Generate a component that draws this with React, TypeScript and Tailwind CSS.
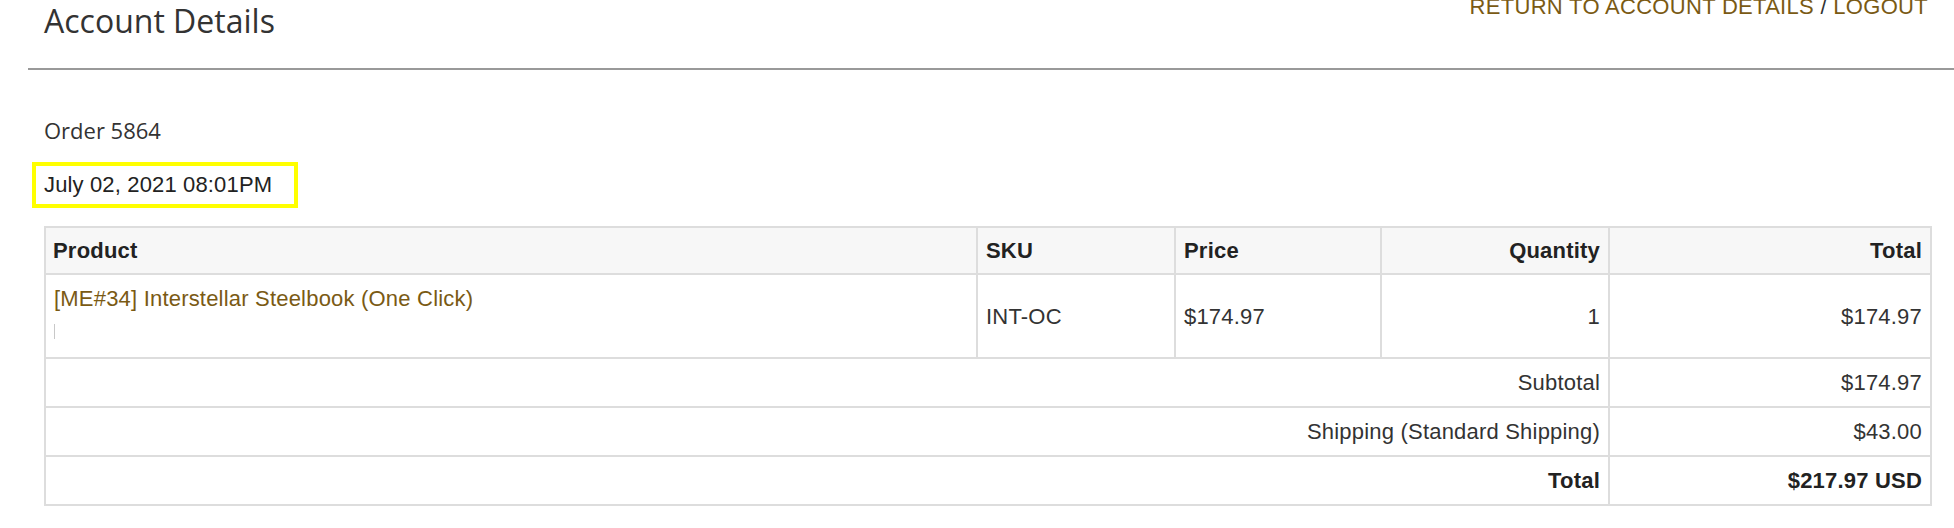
import React from 'react';

const cell = "border-2 border-[#dddddd] px-[8px] py-[8px] leading-[31px]";

export default function App() {
  return (
    <div className="w-[1954px] h-[528px] overflow-hidden bg-white pl-[28px] text-[#333333] font-['Liberation_Sans',Arial,sans-serif]">
      <div className="flex justify-between items-start h-[68px] pl-[16px] pr-[26px]">
        <h1 className="mt-[3px] text-[32px] leading-[36px] text-[#333333] font-['Open_Sans',sans-serif] font-normal">
          Account Details
        </h1>
        <div className="-mt-[6px] text-[22px] leading-[25px] tracking-[0.3px] uppercase">
          <a href="#" className="text-[#7a5a14]">Return to Account Details</a>
          <span className="text-[#333333]"> / </span>
          <a href="#" className="text-[#7a5a14]">Logout</a>
        </div>
      </div>
      <div className="border-t-2 border-[#999999]" />

      <div className="pl-[16px] pr-[22px]">
        <p className="mt-[45px] text-[22px] leading-[30px] text-[#333333] font-['Open_Sans',sans-serif]">
          Order 5864
        </p>
        <div className="mt-[17px] -ml-[12px] w-[266px] border-4 border-[#ffff00] pt-[4px] pb-[4px] pl-[8px] text-[22px] leading-[30px] tracking-[0.15px] text-[#222222]">
          July 02, 2021 08:01PM
        </div>

        <table className="mt-[18px] w-[1888px] table-fixed border-collapse border-2 border-[#dddddd] text-[22px] tracking-[0.2px] text-[#333333]">
          <colgroup>
            <col className="w-[932px]" />
            <col className="w-[198px]" />
            <col className="w-[206px]" />
            <col className="w-[228px]" />
            <col className="w-[322px]" />
          </colgroup>
          <thead>
            <tr className="bg-[#f7f7f7] text-[#222222]">
              <th className="border-2 border-[#dddddd] pl-[7px] pr-[8px] py-[8px] leading-[29px] text-left font-bold">Product</th>
              <th className="border-2 border-[#dddddd] px-[8px] py-[8px] leading-[29px] text-left font-bold">SKU</th>
              <th className="border-2 border-[#dddddd] px-[8px] py-[8px] leading-[29px] text-left font-bold">Price</th>
              <th className="border-2 border-[#dddddd] px-[8px] py-[8px] leading-[29px] text-right font-bold">Quantity</th>
              <th className="border-2 border-[#dddddd] px-[8px] py-[8px] leading-[29px] text-right font-bold">Total</th>
            </tr>
          </thead>
          <tbody>
            <tr>
              <td className={cell + " align-top"}>
                <a href="#" className="block text-[#7a5a14]">[ME#34] Interstellar Steelbook (One Click)</a>
                <div className="h-[35px] pt-[10px]">
                  <span className="block w-px h-[15px] bg-[#c8c8c8]" />
                </div>
              </td>
              <td className={cell + " align-middle"}>INT-OC</td>
              <td className={cell + " align-middle"}>$174.97</td>
              <td className={cell + " align-middle text-right"}>1</td>
              <td className={cell + " align-middle text-right"}>$174.97</td>
            </tr>
            <tr>
              <td colSpan={4} className={cell + " text-right"}>Subtotal</td>
              <td className={cell + " text-right"}>$174.97</td>
            </tr>
            <tr>
              <td colSpan={4} className={cell + " text-right"}>Shipping (Standard Shipping)</td>
              <td className={cell + " text-right"}>$43.00</td>
            </tr>
            <tr className="font-bold text-[#222222]">
              <td colSpan={4} className={cell + " text-right"}>Total</td>
              <td className={cell + " text-right"}>$217.97 USD</td>
            </tr>
          </tbody>
        </table>
      </div>
    </div>
  );
}
